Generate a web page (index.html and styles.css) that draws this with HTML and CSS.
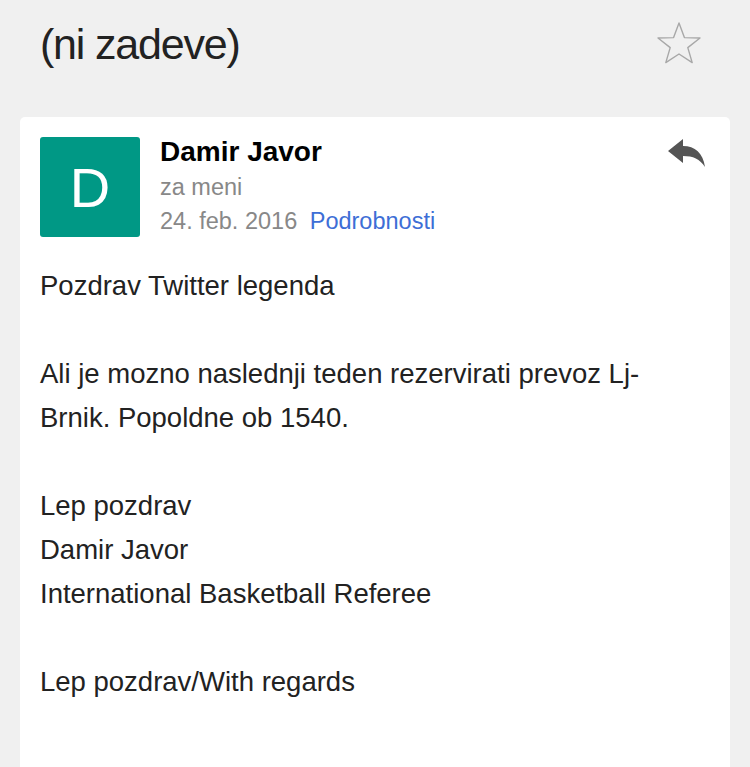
FILE: index.html
```html
<!DOCTYPE html>
<html lang="sl">
<head>
    <meta charset="UTF-8">
    <meta name="viewport" content="width=device-width, initial-scale=1.0">
    <title>(ni zadeve)</title>
    <link rel="stylesheet" href="styles.css">
</head>
<body>
    <header class="subject">
        <h1>(ni zadeve)</h1>
        <svg class="star" width="46" height="44" viewBox="0 0 46 44">
            <polygon points="23,2 28.4,16.6 44,17 31.8,26.6 36.2,41.6 23,33 9.8,41.6 14.2,26.6 2,17 17.6,16.6"
                     fill="none" stroke="#a8a8a8" stroke-width="1.4" stroke-linejoin="round"/>
        </svg>
    </header>

    <main class="message">
        <div class="message-head">
            <div class="avatar">D</div>
            <div class="sender">
                <div class="sender-name">Damir Javor</div>
                <div class="meta">za meni</div>
                <div class="meta">24. feb. 2016 <a href="#" class="details">Podrobnosti</a></div>
            </div>
            <svg class="reply" width="38" height="30" viewBox="0 0 38 30">
                <path d="M0 12 L15 0 L15 7 C27 7 35 14 37 28 C32 20 25 17 15 17 L15 24 Z" fill="#555"/>
            </svg>
        </div>

        <div class="message-body">
            <p>Pozdrav Twitter legenda</p>
            <p>Ali je mozno naslednji teden rezervirati prevoz Lj-<br>Brnik. Popoldne ob 1540.</p>
            <p>Lep pozdrav<br>Damir Javor<br>International Basketball Referee</p>
            <p>Lep pozdrav/With regards</p>
        </div>
    </main>
</body>
</html>
```

FILE: styles.css
```css
/* Basic reset */
* {
    margin: 0;
    padding: 0;
    box-sizing: border-box;
}

body {
    font-family: 'Liberation Sans', Arial, sans-serif;
    color: #222;
    background-color: #f0f0f0;
    height: 767px;
    overflow: hidden;
}

/* Subject line */
.subject {
    display: flex;
    justify-content: space-between;
    align-items: flex-start;
    padding: 18px 48px 0 40px;
    height: 117px;
}

.subject h1 {
    font-size: 43px;
    font-weight: normal;
    line-height: 52px;
    letter-spacing: -1.2px;
    color: #222;
}

.subject .star {
    margin-top: 3px;
}

/* Message card */
.message {
    background-color: #fff;
    margin: 0 20px;
    border-radius: 5px 5px 0 0;
    padding: 20px 20px 0 20px;
    height: 650px;
}

.message-head {
    display: flex;
    align-items: flex-start;
}

.avatar {
    width: 100px;
    height: 100px;
    background-color: #009885;
    border-radius: 3px;
    color: #fff;
    font-size: 56px;
    font-weight: 300;
    display: flex;
    align-items: center;
    justify-content: center;
    flex-shrink: 0;
}

.sender {
    flex: 1;
    padding-left: 20px;
    margin-top: -3px;
}

.sender-name {
    font-size: 28px;
    font-weight: bold;
    color: #000;
    line-height: 36px;
}

.meta {
    font-size: 23.5px;
    color: #888;
    line-height: 34px;
}

.meta .details {
    color: #3d6ed6;
    text-decoration: none;
    margin-left: 6px;
}

.reply {
    margin-top: 2px;
    margin-right: 4px;
}

/* Body text */
.message-body {
    padding-top: 26px;
}

.message-body p {
    font-size: 27.5px;
    line-height: 44px;
    margin-bottom: 44px;
    color: #222;
}
```
